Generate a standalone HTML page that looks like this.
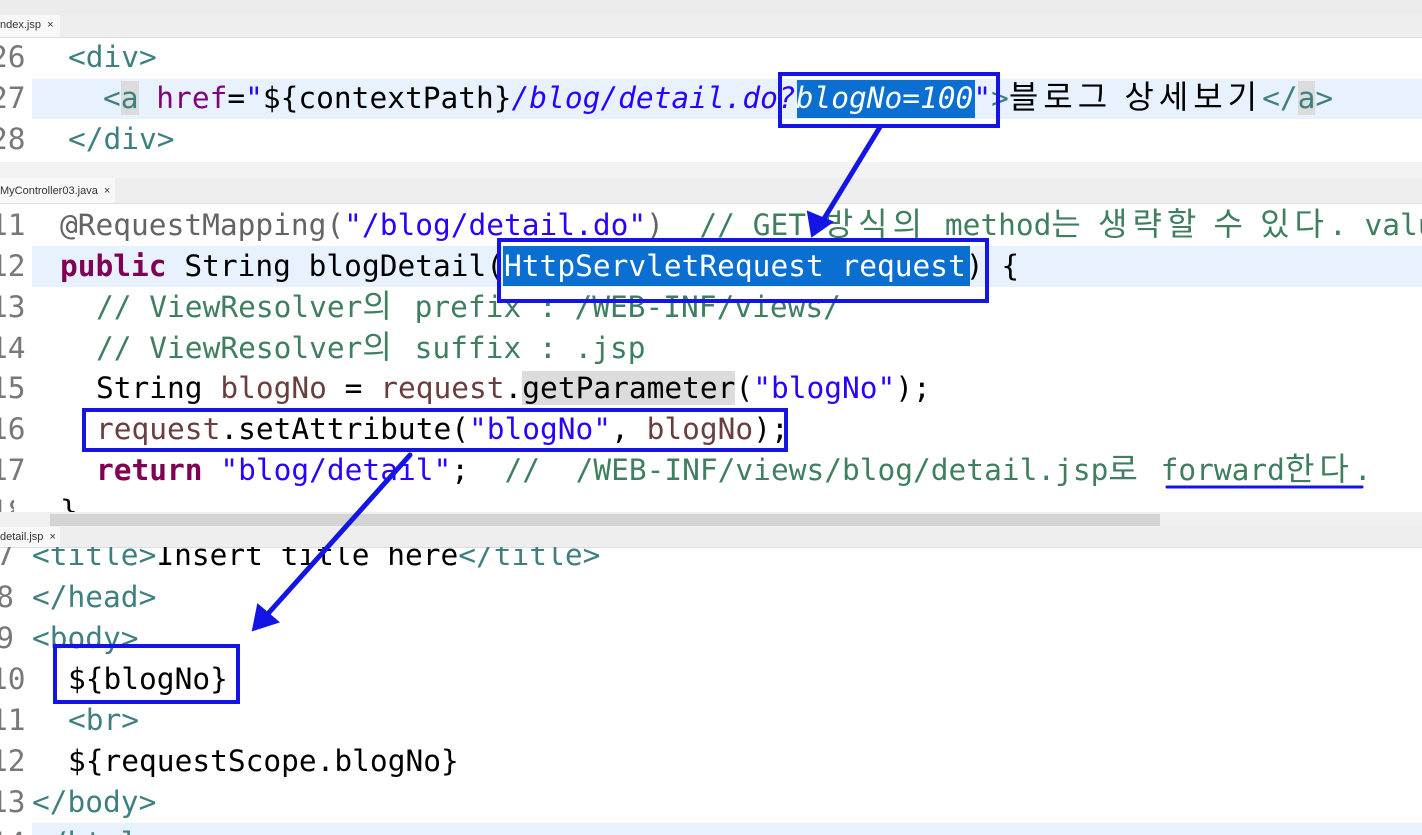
<!DOCTYPE html>
<html><head><meta charset="utf-8"><style>
body{margin:0;width:1422px;height:835px;overflow:hidden;background:#fff;position:relative;font-family:"DejaVu Sans Mono","Liberation Mono","Noto Sans CJK KR",monospace;}
.ln,.l{position:absolute;font-size:29.5px;line-height:41px;white-space:pre;color:#000;}
.ln{color:#787878;text-align:right;width:24px;left:-10px;}
.k{color:#3f7f7f}.at{color:#7f007f}.s{color:#2a00ff;font-style:italic}.kw{color:#7f0055;font-weight:bold}.c{color:#3f7f5f}.js{color:#2a00ff}.v{color:#6a3e3e}.an{color:#646464}
.h{letter-spacing:5px;font-size:32px;line-height:0;font-family:"Noto Sans CJK KR",sans-serif;}
.bar{position:absolute;left:0;width:1422px;}
.tab{position:absolute;font-family:"Liberation Sans",sans-serif;font-size:11px;color:#333;}
.box{position:absolute;border:4px solid #1414e6;box-sizing:border-box;}
.sel{position:absolute;background:#0a6fd0;}
.cur{position:absolute;background:#e8f2fe;left:32px;right:0;}
.g{background:#dcdcdc}
</style></head><body>
<div class="bar" style="top:0;height:15px;background:#ececec"></div>
<div class="bar" style="top:15px;height:22px;background:#eeeeee;border-bottom:1px solid #ddd"></div>
<div style="position:absolute;left:0;top:15px;width:60px;height:22px;background:#f8f8f8"></div>
<div class="tab" style="left:0;top:19px">ndex.jsp &nbsp;×</div>
<div class="cur" style="top:79px;height:40px"></div>
<div class="sel" style="left:797px;top:80px;width:178px;height:38px"></div>
<div class="bar" style="top:162px;height:16px;background:#f3f3f3"></div>
<div class="bar" style="top:178px;height:25px;background:#eeeeee;border-bottom:1px solid #ddd"></div>
<div style="position:absolute;left:0;top:178px;width:115px;height:25px;background:#f8f8f8"></div>
<div class="tab" style="left:0;top:185px">MyController03.java &nbsp;×</div>
<div class="cur" style="top:246px;height:41px"></div>
<div class="sel" style="left:503px;top:246px;width:467px;height:40px"></div>
<div class="bar" style="top:512px;height:15px;background:#f0f0f0"></div>
<div style="position:absolute;left:50px;top:514px;width:1110px;height:12px;background:#d4d4d4"></div>
<div class="bar" style="top:527px;height:20px;background:#eeeeee;border-bottom:1px solid #ddd"></div>
<div style="position:absolute;left:0;top:527px;width:60px;height:20px;background:#f8f8f8"></div>
<div class="tab" style="left:0;top:531px">detail.jsp &nbsp;×</div>
<div class="cur" style="top:823px;height:12px"></div>

<div class="ln" style="top:37px">26</div><div class="l" style="left:68px;top:37px"><span class="k">&lt;div&gt;</span></div>
<div class="ln" style="top:78px">27</div><div class="l" style="left:103px;top:78px"><span class="k">&lt;<span class="g">a</span></span> <span class="at">href</span>=<span class="s">"</span>${contextPath}<span class="s">/blog/detail.do?</span><span class="s" style="color:#fff">blogNo=100</span><span class="s">"</span><span class="k">&gt;</span><span class="h">블로그 상세보기</span><span class="k">&lt;/<span class="g">a</span>&gt;</span></div>
<div class="ln" style="top:119px">28</div><div class="l" style="left:68px;top:119px"><span class="k">&lt;/div&gt;</span></div>

<div class="ln" style="top:205px">11</div><div class="l" style="left:60px;top:205px"><span class="an">@RequestMapping(</span><span class="js">"/blog/detail.do"</span><span class="an">)</span>  <span class="c">// GET <span class="h">방식의</span> method<span class="h">는 생략할 수 있다</span>. value</span></div>
<div class="ln" style="top:246px">12</div><div class="l" style="left:60px;top:246px"><span class="kw">public</span> String blogDetail(<span style="color:#fff">HttpServletRequest request</span>) {</div>
<div class="ln" style="top:287px">13</div><div class="l" style="left:96px;top:287px"><span class="c">// ViewResolver<span class="h">의</span> prefix : /WEB-INF/views/</span></div>
<div class="ln" style="top:328px">14</div><div class="l" style="left:96px;top:328px"><span class="c">// ViewResolver<span class="h">의</span> suffix : .jsp</span></div>
<div class="ln" style="top:368px">15</div><div class="l" style="left:96px;top:368px">String <span class="v">blogNo</span> = <span class="v">request</span>.<span class="g">getParameter</span>(<span class="js">"blogNo"</span>);</div>
<div class="ln" style="top:409px">16</div><div class="l" style="left:96px;top:409px"><span class="v">request</span>.setAttribute(<span class="js">"blogNo"</span>, <span class="v">blogNo</span>);</div>
<div class="ln" style="top:450px">17</div><div class="l" style="left:96px;top:450px"><span class="kw">return</span> <span class="js">"blog/detail"</span>;  <span class="c">//  /WEB-INF/views/blog/detail.jsp<span class="h">로</span> forward<span class="h">한다</span>.</span></div>
<div class="ln" style="top:491px;height:21px;overflow:hidden">18</div><div class="l" style="left:60px;top:491px;height:21px;overflow:hidden">}</div>

<div style="position:absolute;left:0;top:547px;width:1422px;height:288px;overflow:hidden">
<div class="ln" style="top:-12px">7</div><div class="l" style="left:32px;top:-12px"><span class="k">&lt;title&gt;</span>Insert title here<span class="k">&lt;/title&gt;</span></div>
<div class="ln" style="top:30px">8</div><div class="l" style="left:32px;top:30px"><span class="k">&lt;/head&gt;</span></div>
<div class="ln" style="top:71px">9</div><div class="l" style="left:32px;top:71px"><span class="k">&lt;body&gt;</span></div>
<div class="ln" style="top:112px">10</div><div class="l" style="left:68px;top:112px">${blogNo}</div>
<div class="ln" style="top:153px">11</div><div class="l" style="left:68px;top:153px"><span class="k">&lt;br&gt;</span></div>
<div class="ln" style="top:194px">12</div><div class="l" style="left:68px;top:194px">${requestScope.blogNo}</div>
<div class="ln" style="top:235px">13</div><div class="l" style="left:32px;top:235px"><span class="k">&lt;/body&gt;</span></div>
<div class="ln" style="top:276px">14</div><div class="l" style="left:32px;top:276px"><span class="k">&lt;/html&gt;</span></div>
</div>

<div class="box" style="left:778px;top:72px;width:222px;height:56px"></div>
<div class="box" style="left:497px;top:238px;width:492px;height:65px"></div>
<div class="box" style="left:82px;top:408px;width:706px;height:44px"></div>
<div class="box" style="left:53px;top:644px;width:187px;height:60px"></div>
<svg style="position:absolute;left:0;top:0" width="1422" height="835">
<g stroke="#1414e6" stroke-width="5" fill="#1414e6" stroke-linecap="round">
<line x1="880" y1="127" x2="822" y2="222"/>
<polygon points="812,236 808,212 832,222" stroke-width="2"/>
<line x1="410" y1="455" x2="265" y2="617"/>
<polygon points="253,630 258,605 278,622" stroke-width="2"/>
<line x1="1167" y1="487" x2="1362" y2="487" stroke-width="3"/>
</g></svg>
</body></html>
